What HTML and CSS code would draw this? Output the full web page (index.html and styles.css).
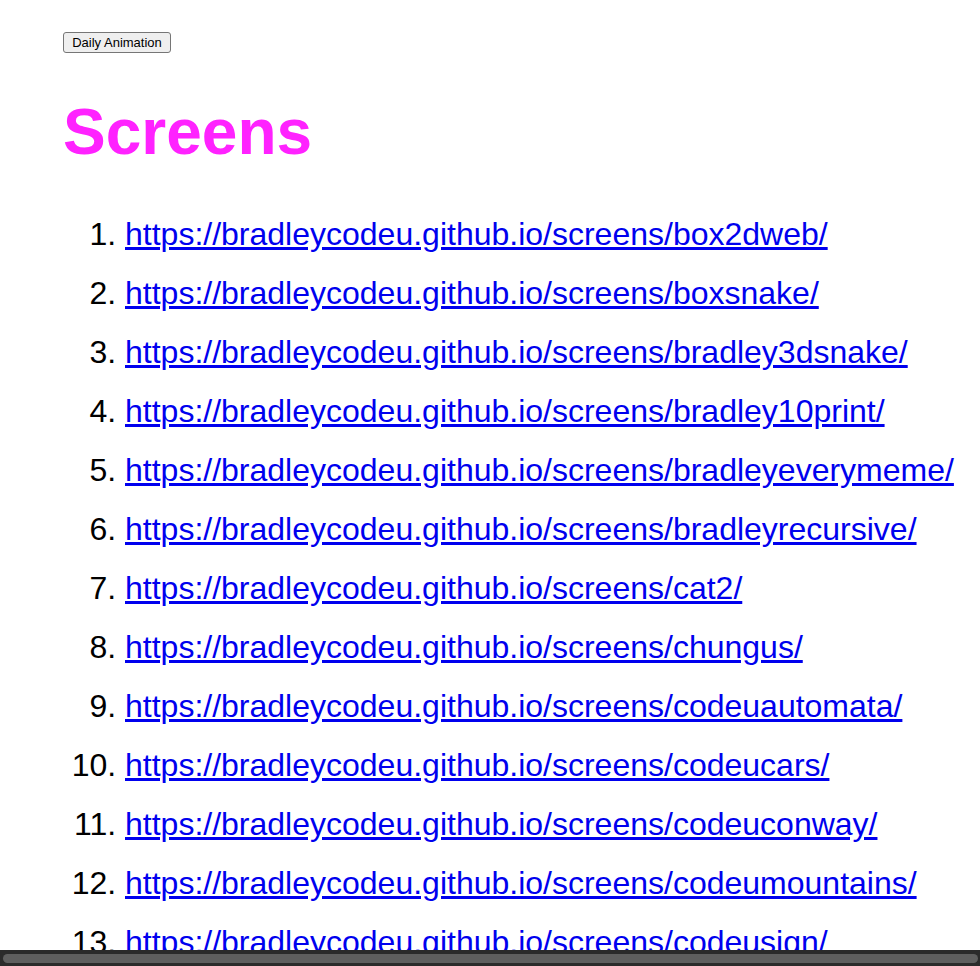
FILE: index.html
```html
<!DOCTYPE html>
<html>
<head>
<meta charset="utf-8">
<title>Screens</title>
<link rel="stylesheet" href="styles.css">
</head>
<body>
<div class="page">
  <button class="daily">Daily Animation</button>
  <h1 class="title">Screens</h1>
  <ol class="screens">
    <li><a href="#">https://bradleycodeu.github.io/screens/box2dweb/</a></li>
    <li><a href="#">https://bradleycodeu.github.io/screens/boxsnake/</a></li>
    <li><a href="#">https://bradleycodeu.github.io/screens/bradley3dsnake/</a></li>
    <li><a href="#">https://bradleycodeu.github.io/screens/bradley10print/</a></li>
    <li><a href="#">https://bradleycodeu.github.io/screens/bradleyeverymeme/</a></li>
    <li><a href="#">https://bradleycodeu.github.io/screens/bradleyrecursive/</a></li>
    <li><a href="#">https://bradleycodeu.github.io/screens/cat2/</a></li>
    <li><a href="#">https://bradleycodeu.github.io/screens/chungus/</a></li>
    <li><a href="#">https://bradleycodeu.github.io/screens/codeuautomata/</a></li>
    <li><a href="#">https://bradleycodeu.github.io/screens/codeucars/</a></li>
    <li><a href="#">https://bradleycodeu.github.io/screens/codeuconway/</a></li>
    <li><a href="#">https://bradleycodeu.github.io/screens/codeumountains/</a></li>
    <li><a href="#">https://bradleycodeu.github.io/screens/codeusign/</a></li>
  </ol>
</div>
<div class="dock"><div class="dock-thumb"></div></div>
</body>
</html>
```
FILE: styles.css
```css
html, body {
  margin: 0;
  padding: 0;
  background: #ffffff;
  font-family: "Liberation Sans", Arial, sans-serif;
  overflow: hidden;
}
.page {
  padding: 32px 0 0 63px;
}
.daily {
  display: block;
  font-family: "Liberation Sans", Arial, sans-serif;
  font-size: 13px;
  height: 21px;
  width: 108px;
  padding: 0 6px;
  margin: 0;
  color: #000;
  background: #efefef;
  border: 1px solid #767676;
  border-radius: 3px;
  line-height: 19px;
  text-align: center;
}
.title {
  font-size: 64px;
  font-weight: bold;
  color: #ff22ff;
  margin: 43px 0 37px 0;
  line-height: 72px;
}
.screens {
  margin: 0;
  padding: 0 0 0 62px;
  font-size: 32px;
}
.screens li {
  line-height: 37px;
  padding: 11px 0;
}
.screens a {
  color: #0000ee;
  text-decoration: underline;
}
.dock {
  position: fixed;
  left: 0;
  right: 0;
  bottom: 0;
  height: 16px;
  background: #2b2b2b;
  padding: 4px 2px 3px 3px;
  box-sizing: border-box;
}
.dock-thumb {
  height: 9px;
  background: #5f5f5f;
  border-radius: 5px;
}
```
